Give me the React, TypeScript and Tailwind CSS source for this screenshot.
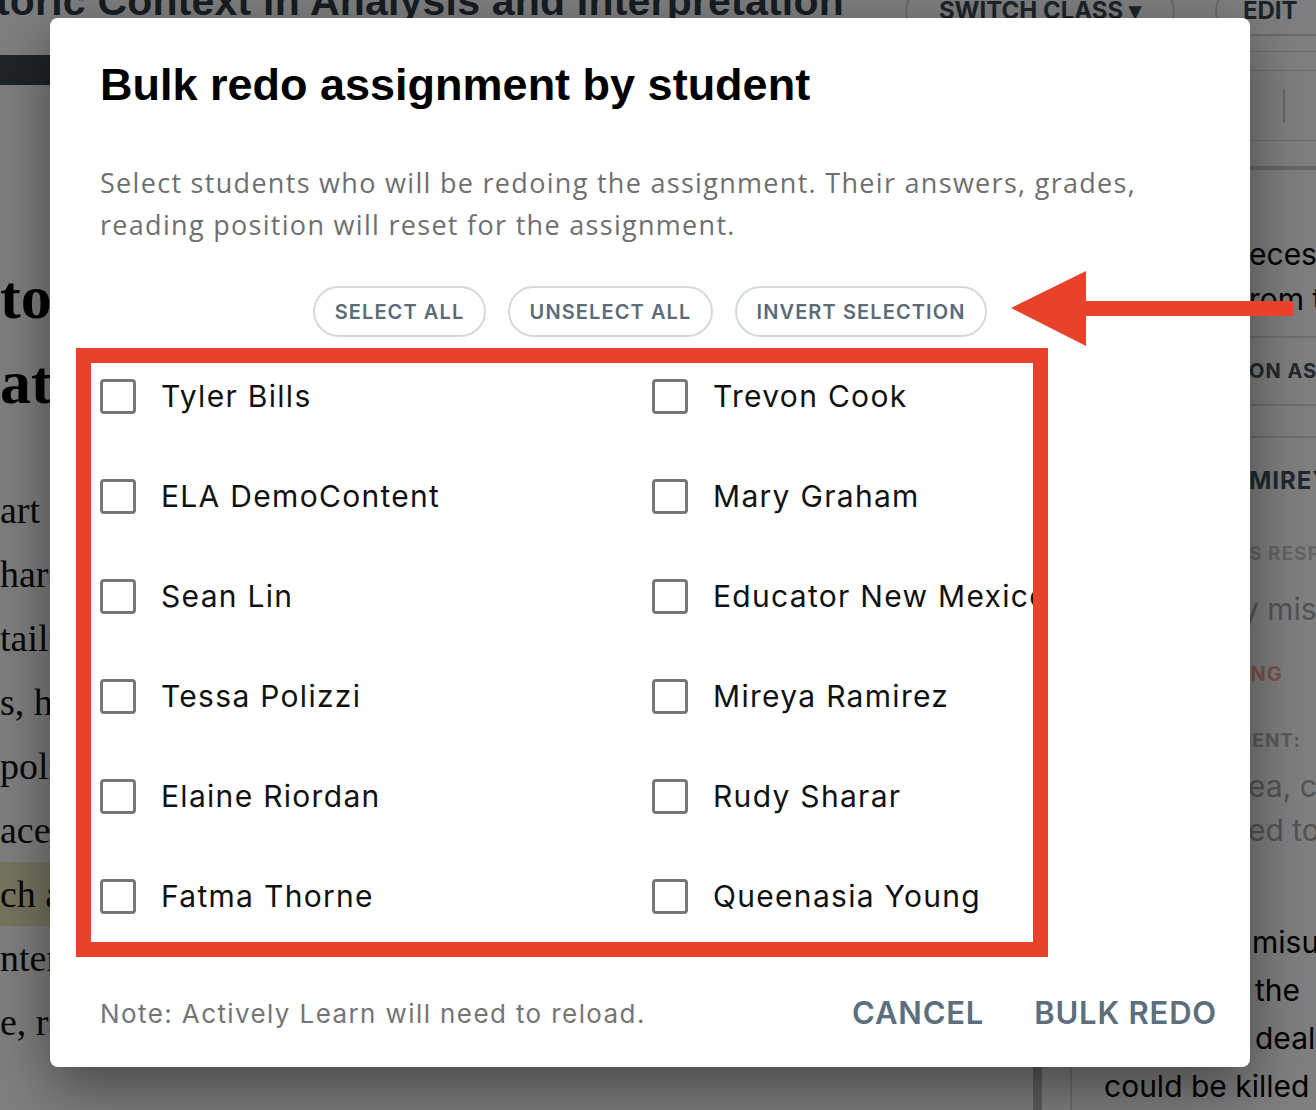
import React, { useState } from "react";

const students = [
  "Tyler Bills",
  "Trevon Cook",
  "ELA DemoContent",
  "Mary Graham",
  "Sean Lin",
  "Educator New Mexico",
  "Tessa Polizzi",
  "Mireya Ramirez",
  "Elaine Riordan",
  "Rudy Sharar",
  "Fatma Thorne",
  "Queenasia Young",
];

const bodyLines = [
  "art of the",
  "hard to",
  "tails",
  "s, he",
  "police",
  "ace of",
  "ch a",
  "nter",
  "e, rather",
];

// page behind the dialog, dimmed by the overlay
const BackgroundPage: React.FC = () => (
  <div className="flex h-full flex-col font-['Liberation_Sans',sans-serif]">
    {/* top header */}
    <div className="flex h-[46px] items-start overflow-hidden">
      <div className="-ml-[4px] -mt-[23px] whitespace-nowrap text-[41px] font-bold leading-[48px] tracking-[0.2px] text-[#2f3c46]">
        toric Context in Analysis and Interpretation
      </div>
      <div className="-mt-[14px] ml-[61px] flex h-[50px] w-[270px] shrink-0 items-center justify-center rounded-full border-2 border-[#cfd6db] text-[24px] font-bold text-[#3a4852] font-['Inter',sans-serif]">
        SWITCH CLASS ▾
      </div>
      <div className="-mt-[14px] ml-[40px] flex h-[50px] w-[140px] shrink-0 items-center rounded-full border-2 border-[#cfd6db] pl-[26px] text-[24px] font-bold text-[#3a4852] font-['Inter',sans-serif]">
        EDIT
      </div>
    </div>

    <div className="flex flex-1">
      {/* main reading column */}
      <div className="w-[1033px] overflow-hidden">
        <div className="mt-[11px] h-[30px] bg-[#3e484f]" />
        <div className="mt-[170px] font-['Liberation_Serif',serif] text-[62px] font-bold leading-[85px] text-black">
          <div className="whitespace-nowrap">to be</div>
          <div className="whitespace-nowrap">ation</div>
        </div>
        <div className="mt-[53px] font-['Liberation_Serif',serif] text-[38px] leading-[64px] text-[#111]">
          {bodyLines.map((line, i) => (
            <div
              key={i}
              className={
                i === 6
                  ? "whitespace-nowrap bg-[#eee8be]"
                  : "whitespace-nowrap"
              }
            >
              {line}
            </div>
          ))}
        </div>
      </div>
      <div className="w-[9px] bg-[#bbb]" />
      <div className="w-[30px] border-r-2 border-[#ddd]" />

      {/* side panel */}
      <div className="flex-1 overflow-hidden font-['Inter',sans-serif]">
        <div className="mt-[7px] h-[20px] border-y border-[#ddd]" />
        <div className="flex h-[70px] items-center border-b border-[#ddd] pl-[170px]">
          <span className="text-[24px] text-[#333]">.</span>
          <span className="ml-[34px] h-[34px] w-[2px] bg-[#ccc]" />
        </div>
        <div className="h-[29px] border-b-4 border-[#ccc]" />
        <div className="mt-[62px] whitespace-nowrap pl-[177px] text-[30px] leading-[45px] text-black">
          <div>ecessary</div>
          <div>rom the</div>
        </div>
        <div className="mt-[14px] flex h-[70px] items-center whitespace-nowrap border-y-2 border-[#ddd] pl-[177px] text-[20px] font-bold tracking-[1px] text-[#44525c]">
          ON ASSIGNMENT
        </div>
        <div className="h-[32px] border-b-2 border-[#ddd]" />
        <div className="mt-[25px] whitespace-nowrap pl-[177px] text-[24px] font-bold tracking-[1px] text-[#44525c]">
          MIREYA RAMIREZ
        </div>
        <div className="mt-[41px] whitespace-nowrap pl-[177px] text-[19px] font-bold tracking-[1px] text-[#c9c9c9]">
          S RESPONSE
        </div>
        <div className="mt-[18px] whitespace-nowrap pl-[170px] text-[30px] text-[#a9a9a9]">
          y misunderstood
        </div>
        <div className="mt-[27px] whitespace-nowrap pl-[172px] text-[20px] font-bold tracking-[1px] text-[#f2a697]">
          ING
        </div>
        <div className="mt-[38px] whitespace-nowrap pl-[174px] text-[19px] font-bold tracking-[1px] text-[#b5b5b5]">
          IENT:
        </div>
        <div className="mt-[9px] whitespace-nowrap pl-[176px] text-[30px] leading-[44px] text-[#a9a9a9]">
          <div>ea, can</div>
          <div>ed to</div>
        </div>
        <div className="mt-[66px] whitespace-nowrap text-[30px] leading-[48px] text-black">
          <div className="pl-[180px]">misunderstand</div>
          <div className="pl-[183px]">the</div>
          <div className="pl-[183px]">deal</div>
          <div className="pl-[32px]">could be killed</div>
        </div>
      </div>
    </div>
  </div>
);

const PillButton: React.FC<{ label: string; width: string; onClick: () => void }> = ({
  label,
  width,
  onClick,
}) => (
  <button
    onClick={onClick}
    className={`${width} flex h-[51px] items-center justify-center rounded-full border-2 border-[#d3dadf] bg-white text-[20px] font-semibold tracking-[1.1px] text-[#5b6b77] font-['Inter',sans-serif]`}
  >
    {label}
  </button>
);

export default function App() {
  const [checked, setChecked] = useState<boolean[]>(students.map(() => false));

  const toggle = (i: number) =>
    setChecked((prev) => prev.map((v, j) => (j === i ? !v : v)));

  return (
    <div className="relative h-[1110px] w-full overflow-hidden bg-white">
      <BackgroundPage />

      {/* overlay */}
      <div className="absolute inset-0 bg-black/50" />

      {/* dialog */}
      <div className="absolute left-[50px] top-[18px] flex h-[1049px] w-[1200px] flex-col rounded-lg bg-white px-[50px] pt-[40px] shadow-[0_20px_60px_rgba(0,0,0,0.45)]">
        <h2 className="font-['Liberation_Sans',sans-serif] text-[45px] font-bold leading-[54px] text-black">
          Bulk redo assignment by student
        </h2>
        <p className="mt-[50px] font-['Open_Sans',sans-serif] text-[27px] leading-[42px] tracking-[1.3px] text-[#6f6f6f]">
          Select students who will be redoing the assignment. Their answers, grades,
          <br />
          reading position will reset for the assignment.
        </p>

        <div className="mt-[40px] flex justify-center gap-[22px]">
          <PillButton
            label="SELECT ALL"
            width="w-[173px]"
            onClick={() => setChecked(students.map(() => true))}
          />
          <PillButton
            label="UNSELECT ALL"
            width="w-[205px]"
            onClick={() => setChecked(students.map(() => false))}
          />
          <PillButton
            label="INVERT SELECTION"
            width="w-[252px]"
            onClick={() => setChecked((prev) => prev.map((v) => !v))}
          />
        </div>

        <div className="mt-[9px] grid grid-cols-[552px_1fr] font-['Inter',sans-serif]">
          {students.map((name, i) => (
            <label key={name} className="flex h-[100px] cursor-pointer items-center">
              <span
                onClick={() => toggle(i)}
                className={
                  checked[i]
                    ? "flex h-[35px] w-[36px] shrink-0 items-center justify-center rounded-[4px] border-[3px] border-[#5b6f7c] bg-[#5b6f7c] text-[22px] text-white"
                    : "h-[35px] w-[36px] shrink-0 rounded-[4px] border-[3px] border-[#777]"
                }
              >
                {checked[i] ? "✓" : null}
              </span>
              <span className="ml-[25px] whitespace-nowrap text-[30px] tracking-[1.3px] text-[#111]">
                {name}
              </span>
            </label>
          ))}
        </div>

        <div className="mt-[47px] flex h-[40px] items-center font-['Inter',sans-serif]">
          <span className="text-[26px] tracking-[1.4px] text-[#757575]">
            Note: Actively Learn will need to reload.
          </span>
          <div className="-mr-[17px] ml-auto flex gap-[50px] text-[31px] font-semibold tracking-[0.8px] text-[#5b6f7c]">
            <button>CANCEL</button>
            <button>BULK REDO</button>
          </div>
        </div>

        {/* red highlight box */}
        <div className="pointer-events-none absolute left-[26px] top-[330px] h-[609px] w-[972px] border-[15px] border-[#e9422a]" />
      </div>

      {/* red arrow pointing at the selection buttons */}
      <svg
        className="pointer-events-none absolute left-[1011px] top-[271px]"
        width="282"
        height="75"
        viewBox="0 0 282 75"
      >
        <polygon points="0,37 75,0 75,30 282,30 282,45 75,45 75,75" fill="#e9422a" />
      </svg>
    </div>
  );
}
